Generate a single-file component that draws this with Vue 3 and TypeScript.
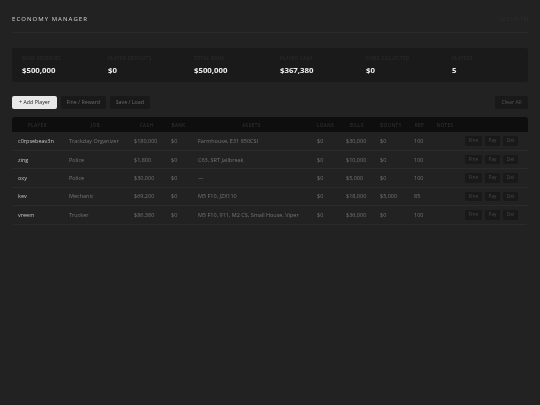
<script setup lang="ts">
interface Player { name: string; job: string; cash: string; bank: string; assets: string; loans: string; bills: string; bounty: string; rep: string }
const stats = [
  { label: 'BANK RESERVES', value: '$500,000' },
  { label: 'PLAYER DEPOSITS', value: '$0' },
  { label: 'TOTAL BANK', value: '$500,000' },
  { label: 'PLAYER CASH', value: '$367,380' },
  { label: 'FINES COLLECTED', value: '$0' },
  { label: 'PLAYERS', value: '5' },
]
const columns = ['PLAYER', 'JOB', 'CASH', 'BANK', 'ASSETS', 'LOANS', 'BILLS', 'BOUNTY', 'REP', 'NOTES', '']
const widths = [51, 65, 37, 27, 119, 29, 34, 34, 23, 28, 69]
const players: Player[] = [
  { name: 'c0rpsebeav3n', job: 'Trackday Organizer', cash: '$180,000', bank: '$0', assets: 'Farmhouse, E31 850CSI', loans: '$0', bills: '$30,000', bounty: '$0', rep: '100' },
  { name: 'zing', job: 'Police', cash: '$1,800', bank: '$0', assets: 'C63, SRT Jailbreak', loans: '$0', bills: '$10,000', bounty: '$0', rep: '100' },
  { name: 'oxy', job: 'Police', cash: '$30,000', bank: '$0', assets: '—', loans: '$0', bills: '$5,000', bounty: '$0', rep: '100' },
  { name: 'kev', job: 'Mechanic', cash: '$69,200', bank: '$0', assets: 'M5 F10, JZX110', loans: '$0', bills: '$18,000', bounty: '$5,000', rep: '85' },
  { name: 'vreem', job: 'Trucker', cash: '$86,380', bank: '$0', assets: 'M5 F10, 911, M2 CS, Small House, Viper', loans: '$0', bills: '$36,000', bounty: '$0', rep: '100' },
]
</script>

<template>
  <div class="page">
    <header class="head">
      <h1>ECONOMY MANAGER</h1>
      <span class="clock">12:23:31 PM</span>
    </header>

    <section class="stats">
      <div v-for="s in stats" :key="s.label" class="stat">
        <div class="label">{{ s.label }}</div>
        <div class="value">{{ s.value }}</div>
      </div>
    </section>

    <div class="toolbar">
      <button class="btn primary">+ Add Player</button>
      <button class="btn">Fine / Reward</button>
      <button class="btn">Save / Load</button>
      <button class="btn clear">Clear All</button>
    </div>

    <div class="tablewrap">
      <table>
        <colgroup>
          <col v-for="(w, i) in widths" :key="i" :style="{ width: w + 'px' }" />
        </colgroup>
        <thead>
          <tr><th v-for="(c, i) in columns" :key="i">{{ c }}</th></tr>
        </thead>
        <tbody>
          <tr v-for="p in players" :key="p.name">
            <td class="name">{{ p.name }}</td>
            <td>{{ p.job }}</td>
            <td>{{ p.cash }}</td>
            <td>{{ p.bank }}</td>
            <td>{{ p.assets }}</td>
            <td>{{ p.loans }}</td>
            <td>{{ p.bills }}</td>
            <td>{{ p.bounty }}</td>
            <td>{{ p.rep }}</td>
            <td></td>
            <td class="acts">
              <span class="act fine">Fine</span><span class="act pay">Pay</span><span class="act">Del</span>
            </td>
          </tr>
        </tbody>
      </table>
    </div>
  </div>
</template>

<style>
html, body { margin: 0; background: #222222; }
</style>

<style scoped>
.page {
  width: 540px;
  height: 405px;
  box-sizing: border-box;
  padding: 0 12px;
  background: #222222;
  font-family: "Open Sans", "Noto Sans", sans-serif;
  overflow: hidden;
  filter: blur(0.3px);
}
.head {
  height: 33px;
  padding-top: 13px;
  box-sizing: border-box;
  display: flex;
  justify-content: space-between;
  border-bottom: 1px solid #2a2a2a;
}
h1 {
  margin: 0;
  font-size: 6px;
  line-height: 12px;
  font-weight: 500;
  letter-spacing: 1.05px;
  color: #d4d4d4;
}
.clock { font-size: 5px; line-height: 12px; color: #2f2f2f; }
.stats {
  margin-top: 15px;
  height: 34px;
  background: #1a1a1a;
  border-radius: 3px;
  padding: 7px 10px 0;
  box-sizing: border-box;
  display: grid;
  grid-template-columns: repeat(6, 86px);
}
.label { font-size: 4.5px; line-height: 7px; letter-spacing: 0.4px; color: #303030; white-space: nowrap; }
.value { margin-top: 3px; font-size: 7.8px; line-height: 11px; font-weight: 700; color: #efefef; }
.toolbar { margin-top: 14px; display: flex; gap: 3.5px; height: 13px; }
.btn {
  border: none;
  border-radius: 2px;
  background: #191919;
  color: #6a6a6a;
  font: 5.3px/13px "Open Sans", "Noto Sans", sans-serif;
  padding: 0 6px;
  height: 13px;
}
.primary { background: #e8e8e8; color: #222222; width: 45px; padding: 0; }
.clear { margin-left: auto; width: 33px; padding: 0; color: #555555; }
.tablewrap {
  margin-top: 8px;
  border-radius: 3px;
  overflow: hidden;
  border-bottom: 1px solid #2a2a2a;
}
table { width: 516px; table-layout: fixed; border-collapse: collapse; }
th {
  height: 15px;
  padding: 0;
  background: #0e0e0e;
  font-size: 4.6px;
  font-weight: 400;
  letter-spacing: 0.5px;
  color: #383838;
  text-align: center;
}
td {
  height: 18.4px;
  padding: 0 0 0 6px;
  box-sizing: border-box;
  font-size: 5.5px;
  color: #757575;
  white-space: nowrap;
  border-top: 1px solid #2b2b2b;
  overflow: visible;
}
tbody tr:first-child td { border-top: none; }
td.name { color: #c4c4c4; font-weight: 500; }
.acts { padding-left: 6px; font-size: 0; }
.act {
  display: inline-block;
  width: 15px;
  height: 9.5px;
  line-height: 9.5px;
  border-radius: 1.5px;
  background: #191919;
  color: #484848;
  font-size: 4.8px;
  text-align: center;
  vertical-align: middle;
}
.act.fine { width: 17px; margin-right: 3px; }
.act.pay { margin-right: 3px; }
</style>
